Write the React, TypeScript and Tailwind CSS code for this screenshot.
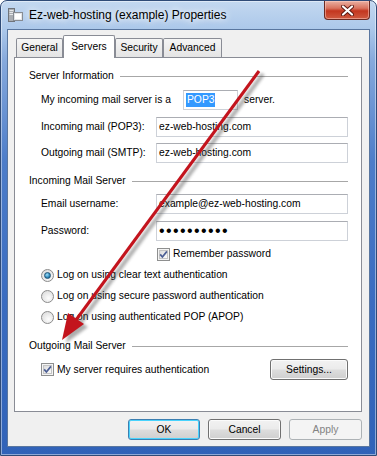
import React from "react";

const ui = "font-['Liberation_Sans',Arial,sans-serif]";

function TitleIcon() {
  return (
    <svg width="15" height="14" viewBox="0 0 15 14" className="shrink-0">
      <rect x="0.5" y="0.5" width="6" height="13" fill="#a9adb3" stroke="#6f747b" />
      <rect x="1.5" y="2" width="4" height="1" fill="#e6e8ea" />
      <rect x="1.5" y="4" width="4" height="1" fill="#e6e8ea" />
      <rect x="1.5" y="6" width="4" height="1" fill="#e6e8ea" />
      <rect x="5.5" y="4.5" width="9" height="8" fill="#e3e5e8" stroke="#868b92" />
      <rect x="7" y="6" width="6" height="5" fill="#ffffff" />
    </svg>
  );
}

function CloseButton() {
  return (
    <div className="self-start mt-0 mr-[6px] h-[19px] w-[46px] rounded-b-[4px] border border-t-0 border-[#6b2a22] bg-[linear-gradient(180deg,#eab0a2_0%,#d9735f_40%,#c3361f_55%,#cf5a40_100%)] shadow-[inset_0_0_0_1px_rgba(255,210,200,0.5)] flex items-center justify-center">
      <svg width="13" height="11" viewBox="0 0 13 11">
        <path d="M2 1.5 L11 9.5 M11 1.5 L2 9.5" stroke="#5a1710" strokeWidth="4" strokeLinecap="round" />
        <path d="M2 1.5 L11 9.5 M11 1.5 L2 9.5" stroke="#ffffff" strokeWidth="2.2" strokeLinecap="round" />
      </svg>
    </div>
  );
}

function Tab({ label, selected, w }: { label: string; selected?: boolean; w: string }) {
  if (selected) {
    return (
      <div className={`relative z-10 -mb-px h-[23px] ${w} flex items-center justify-center border border-b-0 border-[#898c95] rounded-t-[2px] bg-white`}>
        {label}
      </div>
    );
  }
  return (
    <div className={`h-[19px] ${w} flex items-center justify-center border border-b-0 border-[#898c95] rounded-t-[2px] bg-[linear-gradient(180deg,#f5f5f5,#e4e4e4)]`}>
      {label}
    </div>
  );
}

function GroupHeader({ title, className }: { title: string; className: string }) {
  return (
    <div className={`flex items-center h-[16px] ${className}`}>
      <span>{title}</span>
      <div className="flex-1 ml-[6px] h-px bg-[#a7a7a7]" />
    </div>
  );
}

function TextBox({ children, className }: { children: React.ReactNode; className: string }) {
  return (
    <div className={`h-[20px] flex items-center pl-[2px] border border-[#cdd1d8] border-t-[#abadb3] bg-white ${className}`}>
      {children}
    </div>
  );
}

function CheckBox() {
  return (
    <div className="relative w-[13px] h-[13px] shrink-0 border border-[#8e8f8f] bg-[#f4f4f4] p-[1px]">
      <div className="w-full h-full border border-[#c4c4c4] bg-[linear-gradient(135deg,#dcdcdc,#fbfbfb)]" />
      <svg width="13" height="13" viewBox="0 0 13 13" className="absolute -left-px -top-px">
        <path d="M3.2 6.4 L5.4 9 L9.9 3.4" stroke="#4b5e94" strokeWidth="1.7" fill="none" />
      </svg>
    </div>
  );
}

function Radio({ on }: { on?: boolean }) {
  return (
    <div className="w-[13px] h-[13px] shrink-0 rounded-full border border-[#8b8b8b] bg-[radial-gradient(circle_at_60%_65%,#fdfdfd,#d6d6d6)] flex items-center justify-center">
      {on && (
        <div className="w-[7px] h-[7px] rounded-full border border-[#1f5376] bg-[radial-gradient(circle_at_40%_35%,#9fe0fb,#2d86b8_60%,#175277)]" />
      )}
    </div>
  );
}

function WinButton({
  children,
  w,
  focused,
  disabled,
}: {
  children: React.ReactNode;
  w: string;
  focused?: boolean;
  disabled?: boolean;
}) {
  let look =
    "border-[#707070] text-black bg-[linear-gradient(180deg,#f2f2f2_0%,#ebebeb_48%,#dddddd_52%,#cfcfcf_100%)] shadow-[inset_0_0_0_1px_#fbfbfb]";
  if (focused)
    look =
      "border-[#3c7fb1] text-black bg-[linear-gradient(180deg,#f2f2f2_0%,#ebebeb_48%,#dddddd_52%,#cfcfcf_100%)] shadow-[inset_0_0_0_1px_#48d3fd]";
  if (disabled) look = "border-[#adb2b5] text-[#838383] bg-[#f4f4f4]";
  return (
    <div className={`h-[21px] ${w} rounded-[3px] border flex items-center justify-center ${look}`}>
      {children}
    </div>
  );
}

function Arrow() {
  const red = "#c3141d";
  const line = { x1: 259, y1: 71, x2: 76, y2: 320 };
  const head = "62,340 84,324 68,313";
  return (
    <svg width="377" height="456" className="absolute inset-0 pointer-events-none">
      <defs>
        <filter id="arrowShadow" x="-20%" y="-20%" width="140%" height="140%">
          <feGaussianBlur stdDeviation="1.6" />
        </filter>
      </defs>
      <g transform="translate(4 3)" filter="url(#arrowShadow)" opacity="0.45">
        <line {...line} stroke="#4a4a4a" strokeWidth="4" />
        <polygon points={head} fill="#4a4a4a" />
      </g>
      <line {...line} stroke={red} strokeWidth="3" />
      <polygon points={head} fill={red} />
    </svg>
  );
}

export default function App() {
  return (
    <div className={`relative w-[377px] h-[456px] bg-white text-black ${ui}`}>
      <div className="w-[377px] h-[456px] flex flex-col rounded-t-[7px] border border-[#2f4b77] bg-[linear-gradient(180deg,#c3d8f0_0px,#acc8ea_28px,#86a9dc_60px,#4d7dc9_160px,#3a6cc0_300px,#3062b8_456px)] shadow-[inset_0_0_0_1px_rgba(255,255,255,0.45)]">
        {/* title bar */}
        <div className="h-[28px] flex items-center shrink-0">
          <div className="ml-[7px]">
            <TitleIcon />
          </div>
          <span className="ml-[6px] text-[12px] leading-none [text-shadow:0_0_6px_#ffffff,0_0_10px_#ffffff]">
            Ez-web-hosting (example) Properties
          </span>
          <div className="flex-1" />
          <CloseButton />
        </div>

        {/* client area */}
        <div className="mx-[6px] h-[418px] border border-[#59769f] bg-[#f0f0f0] pt-[5px] pl-[6px] text-[10.3px] leading-[14px]">
          <div className="flex items-end h-[22px] pl-[2px]">
            <Tab label="General" w="w-[47px]" />
            <Tab label="Servers" w="w-[52px]" selected />
            <Tab label="Security" w="w-[48px]" />
            <Tab label="Advanced" w="w-[59px]" />
          </div>

          <div className="w-[348px] h-[355px] border border-[#898c95] bg-white pt-[10px] pl-[14px] pr-[13px]">
            <GroupHeader title="Server Information" className="mt-0" />

            <div className="mt-[6px] h-[20px] flex items-center pl-[12px]">
              <span className="w-[142px]">My incoming mail server is a</span>
              <TextBox className="w-[55px] pl-[2px]">
                <span className="bg-[#3399ff] text-white px-[1px] leading-[14px]">POP3</span>
              </TextBox>
              <span className="ml-[6px]">server.</span>
            </div>

            <div className="mt-[7px] h-[20px] flex items-center pl-[12px]">
              <span className="w-[115px]">Incoming mail (POP3):</span>
              <TextBox className="flex-1">ez-web-hosting.com</TextBox>
            </div>

            <div className="mt-[6px] h-[20px] flex items-center pl-[12px]">
              <span className="w-[115px]">Outgoing mail (SMTP):</span>
              <TextBox className="flex-1">ez-web-hosting.com</TextBox>
            </div>

            <GroupHeader title="Incoming Mail Server" className="mt-[10px]" />

            <div className="mt-[5px] h-[20px] flex items-center pl-[12px]">
              <span className="w-[115px]">Email username:</span>
              <TextBox className="flex-1">example@ez-web-hosting.com</TextBox>
            </div>

            <div className="mt-[7px] h-[20px] flex items-center pl-[12px]">
              <span className="w-[115px]">Password:</span>
              <TextBox className="flex-1">
                <span className="text-[16px] leading-none tracking-[1.4px]">••••••••••</span>
              </TextBox>
            </div>

            <div className="mt-[6px] h-[14px] flex items-center pl-[128px]">
              <CheckBox />
              <span className="ml-[3px]">Remember password</span>
            </div>

            <div className="mt-[7px] h-[14px] flex items-center pl-[12px]">
              <Radio on />
              <span className="ml-[3px]">Log on using clear text authentication</span>
            </div>
            <div className="mt-[7px] h-[14px] flex items-center pl-[12px]">
              <Radio />
              <span className="ml-[3px]">Log on using secure password authentication</span>
            </div>
            <div className="mt-[7px] h-[14px] flex items-center pl-[12px]">
              <Radio />
              <span className="ml-[3px]">Log on using authenticated POP (APOP)</span>
            </div>

            <GroupHeader title="Outgoing Mail Server" className="mt-[14px]" />

            <div className="mt-[5px] h-[21px] flex items-center pl-[12px]">
              <CheckBox />
              <span className="ml-[3px]">My server requires authentication</span>
              <div className="flex-1" />
              <WinButton w="w-[78px]">Settings...</WinButton>
            </div>
          </div>

          <div className="mt-[7px] w-[348px] flex justify-end gap-[8px]">
            <WinButton w="w-[72px]" focused>
              OK
            </WinButton>
            <WinButton w="w-[73px]">Cancel</WinButton>
            <WinButton w="w-[73px]" disabled>
              Apply
            </WinButton>
          </div>
        </div>
      </div>
      <Arrow />
    </div>
  );
}
